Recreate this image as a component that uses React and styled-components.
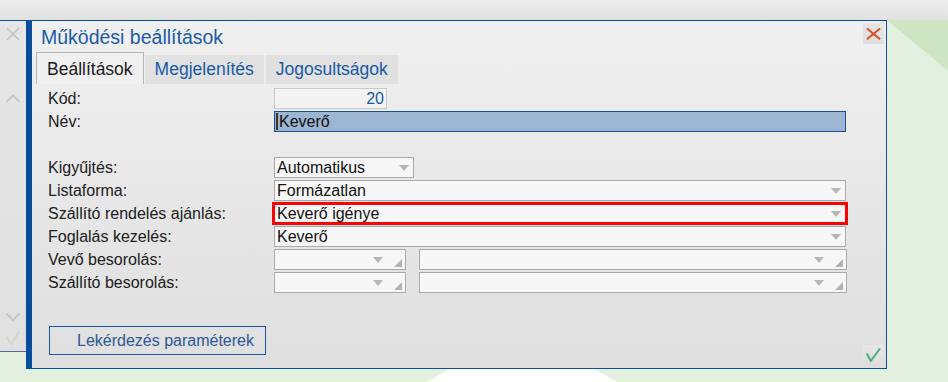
import React from "react";
import styled, { createGlobalStyle } from "styled-components";

const GlobalStyle = createGlobalStyle`
  html, body { margin: 0; padding: 0; }
  body { font-family: "Liberation Sans", Arial, sans-serif; background: #e3efdf; }
  *, *::before, *::after { box-sizing: border-box; }
`;

const Page = styled.div`
  position: relative;
  width: 948px;
  height: 382px;
  overflow: hidden;
  background: #e3efdf;
  font-family: "Liberation Sans", Arial, sans-serif;
`;

const Backdrop = styled.svg`
  position: absolute;
  left: 0;
  top: 0;
  width: 948px;
  height: 382px;
  z-index: 0;
`;

const TopBar = styled.div`
  position: relative;
  z-index: 1;
  height: 20px;
  background: linear-gradient(#ededed, #e1e1e1);
`;

const Workspace = styled.div`
  position: relative;
  z-index: 1;
  display: flex;
  align-items: flex-start;
`;

const SidePanel = styled.div`
  width: 26px;
  height: 332px;
  border-top: 1px solid #0b4f9e;
  border-bottom: 1px solid #50698c;
  background: linear-gradient(#e6e6e6, #e0e0e0);
  display: flex;
  flex-direction: column;
  align-items: flex-start;
  padding: 6px 0 6px 6px;
`;

const SideIcon = styled.svg`
  width: 14px;
  height: 14px;
  flex: none;
  margin-top: ${(p) => (p.$auto ? "auto" : `${p.$mt || 0}px`)};
  stroke: ${(p) => p.$color || "#c2c2c2"};
  stroke-width: 1.6;
  fill: none;
`;

const Dialog = styled.div`
  width: 861px;
  height: 349px;
  border: 1px solid #0b50a0;
  border-left: 6px solid #0a4c9c;
  background: linear-gradient(#f0f0f0, #dfdfdf);
  display: flex;
  flex-direction: column;
`;

const TitleRow = styled.div`
  display: flex;
  justify-content: space-between;
  align-items: flex-start;
  height: 31px;
  padding: 2px 2px 0 9px;
`;

const Title = styled.div`
  font-size: 19.5px;
  line-height: 22px;
  color: #1b5ba8;
  padding-top: 3px;
`;

const WinButton = styled.div`
  width: 21px;
  height: 21px;
  background: linear-gradient(#e6e6e6, #dedede);
  display: grid;
  place-items: center;
`;

const TabStrip = styled.div`
  display: flex;
  align-items: flex-end;
  gap: 1px;
  height: 32px;
  margin-left: 4px;
`;

const Tab = styled.div`
  font-size: 17.5px;
  line-height: 22px;
  white-space: nowrap;
  padding: ${(p) => (p.$active ? "5px 10px 4px" : "3px 10px 4px")};
  color: ${(p) => (p.$active ? "#1c1c1c" : "#1a59a6")};
  background: ${(p) => (p.$active ? "#f0f0f0" : "#e1e1e1")};
  border: ${(p) => (p.$active ? "1px solid #b6b6b6" : "none")};
  border-bottom: none;
  margin-left: ${(p) => p.$ml || 0}px;
`;

const Form = styled.div`
  display: grid;
  grid-template-columns: 226px 572px;
  grid-auto-rows: 21px;
  row-gap: 2px;
  margin: 4px 0 0 16px;
`;

const Label = styled.div`
  font-size: 16px;
  line-height: 21px;
  color: #202020;
  white-space: nowrap;
`;

const FieldCell = styled.div`
  display: flex;
  gap: 13px;
  align-items: flex-start;
`;

const tones = {
  normal: "border: 1px solid #aaaaaa; background: #f7f7f7; color: #111;",
  muted:
    "border: 1px solid #c9c9c9; background: #f3f3f3; color: #1a59a6; justify-content: flex-end; padding-right: 2px !important;",
  selected: "border: 1px solid #1d4f8e; background: #9bb5d3; color: #111;",
  alert:
    "border: 3px solid #ff0000; background: #f7f7f7; color: #111; margin: -1px -2px; height: 23px !important;",
};

const Box = styled.div`
  display: flex;
  align-items: center;
  width: ${(p) => p.$w}px;
  height: 21px;
  padding: 0 4px 0 2px;
  font-size: 16px;
  line-height: 19px;
  white-space: nowrap;
  flex: none;
  ${(p) => tones[p.$tone || "normal"]}
`;

const Value = styled.span`
  flex: 1;
  overflow: hidden;
`;

const Caret = styled.span`
  width: 2px;
  height: 17px;
  background: #3e3426;
  margin-left: -1px;
  margin-right: 1px;
  flex: none;
`;

const Arrow = styled.span`
  width: 0;
  height: 0;
  flex: none;
  border-left: 5.5px solid transparent;
  border-right: 5.5px solid transparent;
  border-top: 6px solid #b6b6b6;
`;

const Corner = styled.span`
  width: 0;
  height: 0;
  flex: none;
  align-self: flex-end;
  margin: 0 -1px 2px 11px;
  border-left: 8px solid transparent;
  border-bottom: 8px solid #b2b2b2;
`;

const Footer = styled.div`
  margin-top: auto;
  display: flex;
  justify-content: space-between;
  align-items: flex-end;
  padding: 0 2px 2px 17px;
`;

const QueryButton = styled.button`
  height: 29px;
  width: 217px;
  margin-bottom: 11px;
  border: 1px solid #1b56a3;
  background: transparent;
  font-family: "Liberation Sans", Arial, sans-serif;
  font-size: 16px;
  color: #2d5797;
  text-align: left;
  padding: 0 0 0 27px;
`;

function Select({ w, value, tone, corner }) {
  return (
    <Box $w={w} $tone={tone}>
      <Value>{value}</Value>
      <Arrow />
      {corner && <Corner />}
    </Box>
  );
}

const rows = [
  { label: "Kigyűjtés:", fields: [{ w: 140, value: "Automatikus" }] },
  { label: "Listaforma:", fields: [{ w: 572, value: "Formázatlan" }] },
  {
    label: "Szállító rendelés ajánlás:",
    fields: [{ w: 576, value: "Keverő igénye", tone: "alert" }],
  },
  { label: "Foglalás kezelés:", fields: [{ w: 572, value: "Keverő" }] },
  {
    label: "Vevő besorolás:",
    fields: [
      { w: 132, value: "", corner: true },
      { w: 428, value: "", corner: true },
    ],
  },
  {
    label: "Szállító besorolás:",
    fields: [
      { w: 132, value: "", corner: true },
      { w: 428, value: "", corner: true },
    ],
  },
];

export default function App() {
  return (
    <Page>
      <GlobalStyle />
      <Backdrop viewBox="0 0 948 382" aria-hidden="true">
        <polygon points="887,20 948,20 948,71" fill="#cde5c3" />
        <polygon points="427,382 451,368 593,368 617,382" fill="#ffffff" />
      </Backdrop>
      <TopBar />
      <Workspace>
        <SidePanel>
          <SideIcon viewBox="0 0 14 14">
            <path d="M1 1 L13 13 M13 1 L1 13" />
          </SideIcon>
          <SideIcon viewBox="0 0 14 14" $mt={51}>
            <path d="M0.5 10 L7 3.5 L13.5 10" />
          </SideIcon>
          <SideIcon viewBox="0 0 14 14" $auto>
            <path d="M0.5 3.5 L7 10 L13.5 3.5" />
          </SideIcon>
          <SideIcon viewBox="0 0 14 14" $mt={7} $color="#d2d2d2">
            <path d="M0.5 6 L5 13.5 L13 0.8" />
          </SideIcon>
        </SidePanel>
        <Dialog>
          <TitleRow>
            <Title>Működési beállítások</Title>
            <WinButton>
              <svg width="21" height="21" viewBox="0 0 21 21">
                <path
                  d="M4 5.5 L17 16.3 M17 5.5 L4 16.3"
                  stroke="#d9512c"
                  strokeWidth="2.1"
                  fill="none"
                />
              </svg>
            </WinButton>
          </TitleRow>
          <TabStrip>
            <Tab $active>Beállítások</Tab>
            <Tab>Megjelenítés</Tab>
            <Tab $ml={1}>Jogosultságok</Tab>
          </TabStrip>
          <Form>
            <Label>Kód:</Label>
            <FieldCell>
              <Box $w={113} $tone="muted">
                20
              </Box>
            </FieldCell>
            <Label>Név:</Label>
            <FieldCell>
              <Box $w={572} $tone="selected">
                <Caret />
                <Value>Keverő</Value>
              </Box>
            </FieldCell>
            <Label />
            <FieldCell />
            {rows.map((r) => (
              <React.Fragment key={r.label}>
                <Label>{r.label}</Label>
                <FieldCell>
                  {r.fields.map((f, i) => (
                    <Select
                      key={i}
                      w={f.w}
                      value={f.value}
                      tone={f.tone}
                      corner={f.corner}
                    />
                  ))}
                </FieldCell>
              </React.Fragment>
            ))}
          </Form>
          <Footer>
            <QueryButton>Lekérdezés paraméterek</QueryButton>
            <WinButton>
              <svg width="21" height="21" viewBox="0 0 21 21">
                <path
                  d="M3.8 8.5 L7.8 16 L17 3.5"
                  stroke="#4cae7e"
                  strokeWidth="2"
                  fill="none"
                />
              </svg>
            </WinButton>
          </Footer>
        </Dialog>
      </Workspace>
    </Page>
  );
}
